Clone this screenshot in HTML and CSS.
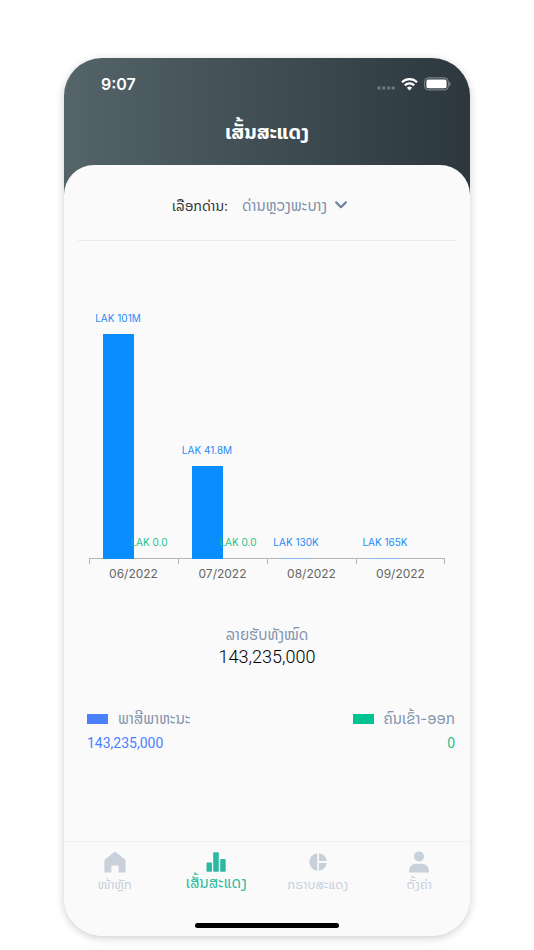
FILE: index.html
```
<!DOCTYPE html>
<html lang="lo">
<head>
    <meta charset="UTF-8">
    <meta name="viewport" content="width=device-width, initial-scale=1.0">
    <title>ເສັ້ນສະແດງ</title>
    <link rel="stylesheet" href="styles.css">
</head>
<body>
    <div class="phone">
        <!-- Status bar -->
        <div class="status-bar">
            <span class="time">9:07</span>
            <div class="status-icons">
                <svg width="18" height="5" viewBox="0 0 18 5" fill="#6c787d">
                    <circle cx="2" cy="2" r="1.8"/><circle cx="6.8" cy="2" r="1.8"/><circle cx="11.6" cy="2" r="1.8"/><circle cx="16.2" cy="2" r="1.8"/>
                </svg>
                <svg width="17" height="13" viewBox="0 0 17 13" fill="none" stroke="#fff" stroke-width="2.2">
                    <path d="M1 4.3a10.6 10.6 0 0 1 15 0"/>
                    <path d="M3.8 7.4a6.7 6.7 0 0 1 9.4 0"/>
                    <path d="M8.5 12.5L5.9 9.8a3.7 3.7 0 0 1 5.2 0z" fill="#fff" stroke="none"/>
                </svg>
                <svg width="27" height="14" viewBox="0 0 27 14">
                    <rect x="0.7" y="0.9" width="23.6" height="12" rx="3.6" fill="none" stroke="#8a9492"/>
                    <rect x="2.4" y="2.6" width="20.2" height="8.6" rx="1.8" fill="#fff"/>
                    <path d="M25.3 4.8a2.3 2.3 0 0 1 0 4.2z" fill="#8a9492"/>
                </svg>
            </div>
        </div>

        <h1 class="title">ເສັ້ນສະແດງ</h1>

        <main class="sheet">
            <!-- Checkpoint selection -->
            <div class="filter">
                <label for="checkpoint">ເລືອກດ່ານ:</label>
                <div class="select-wrap">
                    <select id="checkpoint">
                        <option>ດ່ານຫຼວງພະບາງ</option>
                    </select>
                    <svg width="12" height="8" viewBox="0 0 12 8" fill="none" stroke="#71839f" stroke-width="2.2" stroke-linecap="round" stroke-linejoin="round">
                        <path d="M1.2 1.4L6 6.2l4.8-4.8"/>
                    </svg>
                </div>
            </div>

            <!-- Monthly income chart -->
            <div class="chart">
                <div class="month">
                    <div class="bars">
                        <div class="slot"><span>LAK 101M</span><div class="bar" style="height: 225px"></div></div>
                        <div class="slot people"><span>LAK 0.0</span><div class="bar empty"></div></div>
                    </div>
                    <div class="tick">06/2022</div>
                </div>
                <div class="month">
                    <div class="bars">
                        <div class="slot"><span>LAK 41.8M</span><div class="bar" style="height: 93px"></div></div>
                        <div class="slot people"><span>LAK 0.0</span><div class="bar empty"></div></div>
                    </div>
                    <div class="tick">07/2022</div>
                </div>
                <div class="month">
                    <div class="bars">
                        <div class="slot"><span>LAK 130K</span><div class="bar tiny" style="height: 1px"></div></div>
                        <div class="slot people"></div>
                    </div>
                    <div class="tick">08/2022</div>
                </div>
                <div class="month">
                    <div class="bars">
                        <div class="slot"><span>LAK 165K</span><div class="bar tiny" style="height: 1px"></div></div>
                        <div class="slot people"></div>
                    </div>
                    <div class="tick">09/2022</div>
                </div>
            </div>

            <!-- Totals -->
            <div class="total">
                <div class="total-label">ລາຍຮັບທັງໝົດ</div>
                <div class="total-value">143,235,000</div>
            </div>

            <div class="legend">
                <div class="legend-item">
                    <div class="legend-name"><i class="swatch"></i>ພາສີພາຫະນະ</div>
                    <div class="legend-value">143,235,000</div>
                </div>
                <div class="legend-item right">
                    <div class="legend-name"><i class="swatch"></i>ຄົນເຂົ້າ-ອອກ</div>
                    <div class="legend-value">0</div>
                </div>
            </div>

            <!-- Bottom navigation -->
            <nav class="tabs">
                <a href="#home">
                    <svg width="24" height="24" viewBox="0 0 24 24"><path d="M12 1.6L22.6 10v12.4h-7v-7H8.4v7h-7V10z"/></svg>
                    ໜ້າຫຼັກ
                </a>
                <a href="#bars" class="active">
                    <svg width="24" height="24" viewBox="0 0 24 24"><rect x="2.5" y="12.5" width="5.5" height="9.3" rx="1"/><rect x="9.2" y="2.3" width="5.6" height="19.5" rx="1"/><rect x="16.2" y="9" width="5.5" height="12.8" rx="1"/></svg>
                    ເສັ້ນສະແດງ
                </a>
                <a href="#graph">
                    <svg width="24" height="24" viewBox="0 0 24 24"><path d="M11.3 3.2v17.6a8.85 8.85 0 0 1 0-17.6zM13 3.2a8.9 8.9 0 0 1 7.8 7.9H13zM13 12.9h7.8a8.9 8.9 0 0 1-7.8 7.9z"/></svg>
                    ກຣາບສະແດງ
                </a>
                <a href="#settings">
                    <svg width="24" height="24" viewBox="0 0 24 24"><circle cx="12" cy="6.4" r="5"/><path d="M2 22.4v-1c0-4.6 3-7.6 7.5-7.6h5c4.5 0 7.5 3 7.5 7.6v1z"/></svg>
                    ຕັ້ງຄ່າ
                </a>
            </nav>
            <div class="home-indicator"></div>
        </main>
    </div>
</body>
</html>
```
FILE: styles.css
```
* {
    box-sizing: border-box;
}

body {
    margin: 0;
    padding: 58px 64px 14px;
    min-height: 100vh;
    display: flex;
    background: #fff;
    font-family: Inter, "Noto Sans Lao", "DejaVu Sans", sans-serif;
    color: #333;
}

.phone {
    flex: 1;
    min-width: 0;
    display: flex;
    flex-direction: column;
    border-radius: 38px;
    overflow: hidden;
    background: linear-gradient(to right, #546469, #2c373e) top / 100% 160px no-repeat #fafafa;
    box-shadow: 0 2px 8px rgba(0, 0, 0, 0.2);
}

.status-bar {
    display: flex;
    justify-content: space-between;
    align-items: center;
    height: 51px;
    padding: 0 19px 0 37px;
    color: #fff;
}

.time {
    font-size: 16px;
    font-weight: 600;
}

.status-icons {
    display: flex;
    align-items: flex-end;
    gap: 6px;
}

.title {
    margin: 0;
    height: 56px;
    line-height: 46px;
    text-align: center;
    font-size: 20px;
    font-weight: 700;
    color: #fff;
}

.sheet {
    flex: 1;
    display: flex;
    flex-direction: column;
    border-radius: 30px 30px 0 0;
    background: #fafafa;
}

.filter {
    display: flex;
    justify-content: center;
    align-items: center;
    gap: 14px;
    height: 76px;
    margin: 0 14px;
    padding: 5px 15px 0 0;
    border-bottom: 1px solid #ebebeb;
    font-size: 14px;
}

.select-wrap {
    display: flex;
    align-items: center;
    gap: 8px;
    font-size: 15px;
}

.select-wrap select {
    appearance: none;
    border: 0;
    padding: 0;
    background: none;
    font: inherit;
    color: #7d8faa;
}

.chart {
    display: flex;
    height: 341px;
    margin: 0 25px;
    padding-top: 60px;
}

.month {
    flex: 1;
    display: flex;
    flex-direction: column;
}

/* bars stand on the axis line */
.bars {
    position: relative;
    z-index: 1;
    flex: 1;
    display: flex;
    justify-content: center;
    align-items: flex-end;
    margin-bottom: -1px;
}

.slot {
    width: 31px;
    display: flex;
    flex-direction: column;
    align-items: center;
    gap: 10px;
    color: #1f8bf5;
    font-size: 10px;
    line-height: 12px;
    white-space: nowrap;
}

.people {
    color: #1fbf8c;
}

.bar {
    width: 100%;
    background: #0a8dff;
}

.tiny {
    background: #8ab8f0;
}

.empty {
    height: 1px;
    background: none;
}

.tick {
    height: 24px;
    text-align: center;
    font-size: 12px;
    line-height: 30px;
    color: #666;
    border-top: 1px solid #b5b5b5;
    background: linear-gradient(#b5b5b5, #b5b5b5) left top / 1px 5px no-repeat;
}

.month:last-child .tick {
    background: linear-gradient(#b5b5b5, #b5b5b5) left top / 1px 5px no-repeat, linear-gradient(#b5b5b5, #b5b5b5) right top / 1px 5px no-repeat;
}

.total {
    margin-top: 41px;
    text-align: center;
}

.total-label {
    font-size: 15px;
    line-height: 24px;
    color: #8294ae;
}

.total-value {
    font-family: Roboto, sans-serif;
    font-size: 18px;
    font-weight: 300;
    line-height: 20px;
    color: #000;
}

.legend {
    display: flex;
    justify-content: space-between;
    margin: 39px 15px 0 23px;
}

.legend-name {
    display: flex;
    align-items: center;
    gap: 10px;
    font-size: 15px;
    line-height: 26px;
    color: #8294ae;
}

.swatch {
    width: 21px;
    height: 10px;
    background: #4a80ff;
}

.legend-value {
    font-family: Roboto, sans-serif;
    font-size: 14px;
    line-height: 22px;
    color: #4a80ff;
}

.right {
    text-align: right;
}

.right .swatch {
    background: #00c391;
}

.right .legend-value {
    color: #1fbf8c;
}

.tabs {
    display: flex;
    margin-top: auto;
    padding-top: 8px;
    height: 82px;
    border-top: 1px solid #f1f1f1;
}

.tabs a {
    flex: 1;
    display: flex;
    flex-direction: column;
    align-items: center;
    font-size: 13px;
    line-height: 20px;
    color: #c8d0da;
    text-decoration: none;
}

.tabs svg {
    fill: currentColor;
}

.tabs .active {
    font-size: 15px;
    line-height: 18px;
    color: #2bb9a2;
}

.home-indicator {
    width: 144px;
    height: 5px;
    margin: 0 auto 8px;
    border-radius: 3px;
    background: #000;
}
```
